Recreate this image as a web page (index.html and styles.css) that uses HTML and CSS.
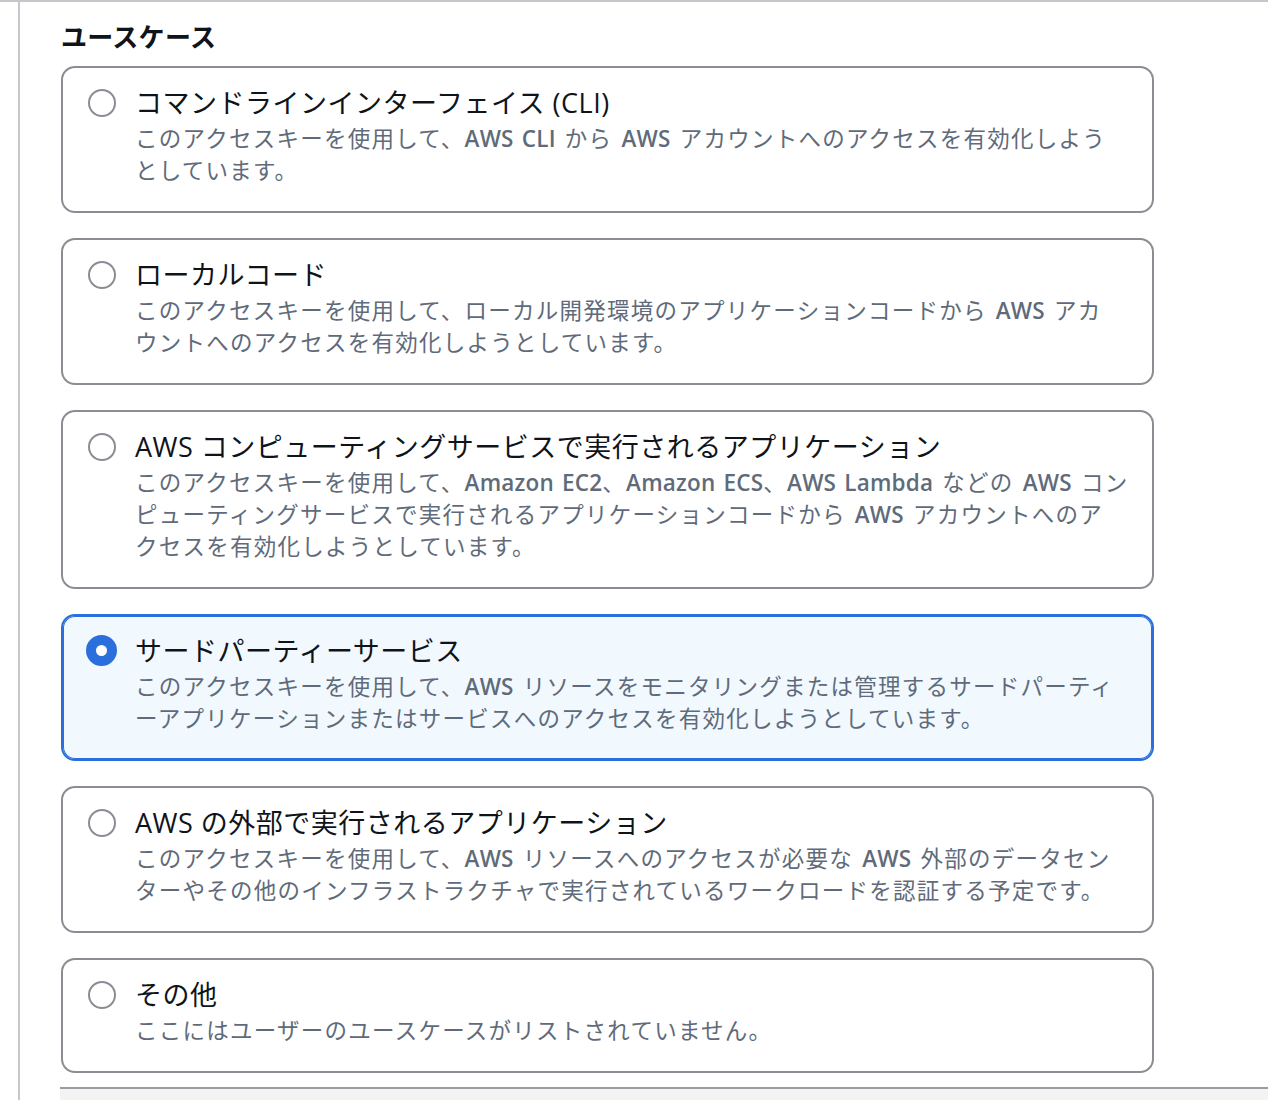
FILE: index.html
```html
<!DOCTYPE html>
<html lang="ja">
<head>
<meta charset="utf-8">
<title>ユースケース</title>
<link rel="stylesheet" href="styles.css">
</head>
<body>
<div class="page">
  <div class="frame">
    <section class="usecase">
      <h2 class="heading">ユースケース</h2>
      <div class="tiles">
        <label class="tile">
          <span class="radio"><span class="dot"></span></span>
          <span class="tile-body">
            <span class="tile-title">コマンドラインインターフェイス (CLI)</span>
            <span class="tile-desc">このアクセスキーを使用して、<span class="en">AWS CLI</span> から <span class="en">AWS</span> アカウントへのアクセスを有効化しよう<br>としています。</span>
          </span>
        </label>
        <label class="tile">
          <span class="radio"><span class="dot"></span></span>
          <span class="tile-body">
            <span class="tile-title">ローカルコード</span>
            <span class="tile-desc">このアクセスキーを使用して、ローカル開発環境のアプリケーションコードから <span class="en">AWS</span> アカ<br>ウントへのアクセスを有効化しようとしています。</span>
          </span>
        </label>
        <label class="tile">
          <span class="radio"><span class="dot"></span></span>
          <span class="tile-body">
            <span class="tile-title">AWS コンピューティングサービスで実行されるアプリケーション</span>
            <span class="tile-desc">このアクセスキーを使用して、<span class="en">Amazon EC2</span>、<span class="en">Amazon ECS</span>、<span class="en">AWS Lambda</span> などの <span class="en">AWS</span> コン<br>ピューティングサービスで実行されるアプリケーションコードから <span class="en">AWS</span> アカウントへのア<br>クセスを有効化しようとしています。</span>
          </span>
        </label>
        <label class="tile is-selected">
          <span class="radio"><span class="dot"></span></span>
          <span class="tile-body">
            <span class="tile-title">サードパーティーサービス</span>
            <span class="tile-desc">このアクセスキーを使用して、<span class="en">AWS</span> リソースをモニタリングまたは管理するサードパーティ<br>ーアプリケーションまたはサービスへのアクセスを有効化しようとしています。</span>
          </span>
        </label>
        <label class="tile">
          <span class="radio"><span class="dot"></span></span>
          <span class="tile-body">
            <span class="tile-title">AWS の外部で実行されるアプリケーション</span>
            <span class="tile-desc">このアクセスキーを使用して、<span class="en">AWS</span> リソースへのアクセスが必要な <span class="en">AWS</span> 外部のデータセン<br>ターやその他のインフラストラクチャで実行されているワークロードを認証する予定です。</span>
          </span>
        </label>
        <label class="tile">
          <span class="radio"><span class="dot"></span></span>
          <span class="tile-body">
            <span class="tile-title">その他</span>
            <span class="tile-desc">ここにはユーザーのユースケースがリストされていません。</span>
          </span>
        </label>
      </div>
    </section>
    <div class="divider"></div>
    <div class="below"></div>
  </div>
</div>
</body>
</html>
```

FILE: styles.css
```css
* { box-sizing: border-box; }

html, body {
  margin: 0;
  padding: 0;
  background: #ffffff;
}

body {
  font-family: "Open Sans", "Noto Sans CJK JP", sans-serif;
  color: #0f141a;
}

.page {
  border-top: 2px solid #c6c6cd;
  height: 1100px;
  overflow: hidden;
}

.frame {
  margin-left: 18px;
  border-left: 2px solid #c6c6cd;
  height: 100%;
  padding-left: 40px;
  display: flex;
  flex-direction: column;
}

.usecase {
  padding-left: 1px;
  padding-top: 17px;
}

.heading {
  margin: 0 0 11px 0;
  font-size: 26px;
  line-height: 36px;
  font-weight: 700;
  letter-spacing: 0.3px;
  color: #0f141a;
}

.tiles {
  width: 1093px;
  display: flex;
  flex-direction: column;
  gap: 25px;
}

.tile {
  display: flex;
  align-items: flex-start;
  gap: 18px;
  border: 2px solid #8c8c94;
  border-radius: 14px;
  padding: 15px 20px 24px 23px;
  background: #ffffff;
  cursor: pointer;
}

.tile.is-selected {
  border-color: #2b6fdc;
  box-shadow: inset 0 0 0 1px #2b6fdc;
  background: #f1f9ff;
}

.radio {
  flex: 0 0 auto;
  width: 31px;
  height: 31px;
  margin-top: 4px;
  display: flex;
  align-items: center;
  justify-content: center;
}

.dot {
  display: block;
  width: 28px;
  height: 28px;
  border-radius: 50%;
  border: 2px solid #8c8c94;
  background: #ffffff;
}

.is-selected .dot {
  width: 31px;
  height: 31px;
  border: 10px solid #2b6fdc;
}

.tile-body {
  display: flex;
  flex-direction: column;
  min-width: 0;
}

.tile-title {
  font-size: 27px;
  line-height: 40px;
  letter-spacing: 0.5px;
  color: #0f141a;
}

.tile-desc {
  font-size: 22.5px;
  line-height: 32px;
  letter-spacing: 1.25px;
  word-spacing: 2px;
  color: #5f6b7a;
  white-space: nowrap;
}

.en {
  font-weight: 600;
  letter-spacing: 0.2px;
}

.divider {
  margin-top: 14px;
  height: 2px;
  background: #9b9ba1;
  margin-right: -20px;
}

.below {
  flex: 1;
  background: #f3f3f4;
  margin-right: -20px;
}
```
